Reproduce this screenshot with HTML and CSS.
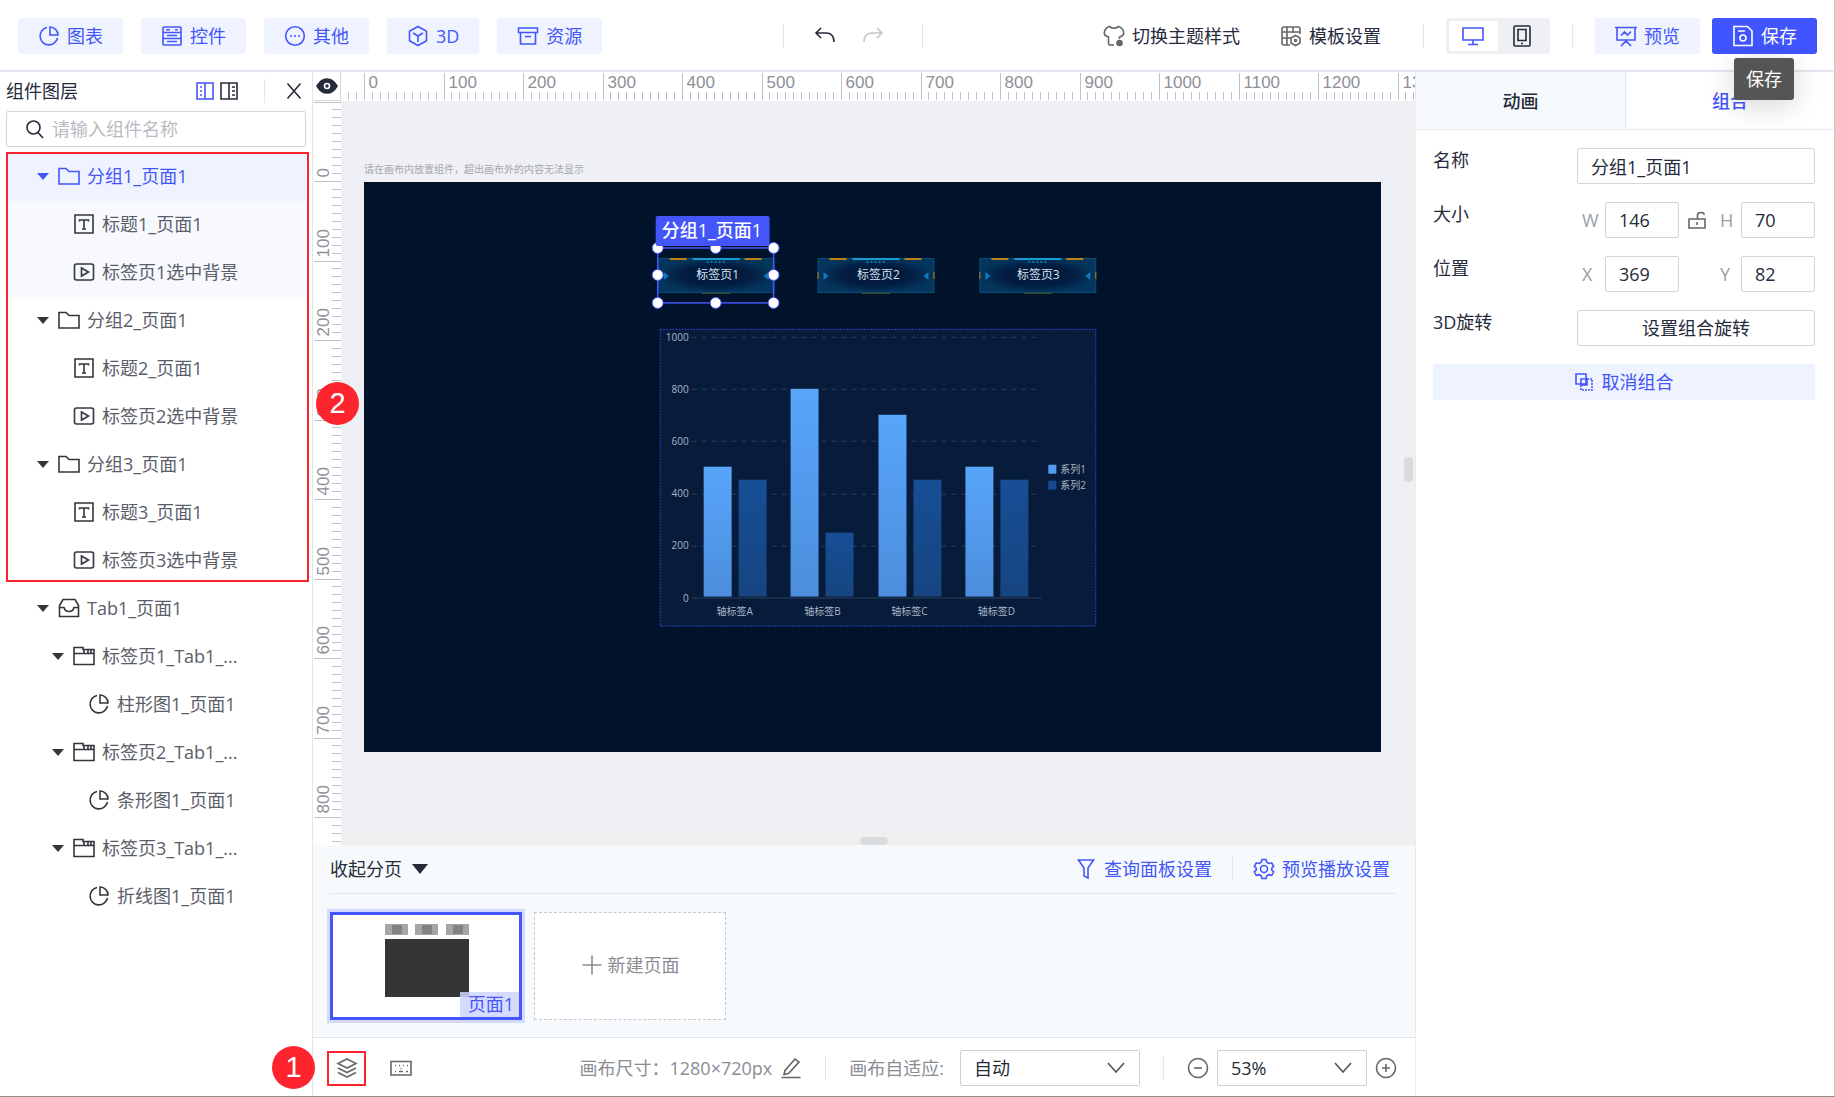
FILE: index.html
```html
<!DOCTYPE html>
<html lang="zh-CN">
<head>
	<meta charset="utf-8">
	<title>页面1 | 大屏编辑器</title>

	<link rel="stylesheet" href="styles.css">
</head>
<body>
<!-- icon set -->
<svg class="icon-defs" aria-hidden="true">
	<symbol id="i-pie" viewBox="0 0 22 22"><path d="M9 2.500a8.800 8.800 0 1 0 10.500 10.500M12 2v8h8a8 8 0 0 0-8-8z"/></symbol>
	<symbol id="i-control" viewBox="0 0 22 22"><rect x="2" y="2" width="18" height="18" rx="1"/><path d="M2 7.500h18M2 13.500h18M6 10.500h10M6 16.500h10M5 4.700h4M14 4.700h3"/></symbol>
	<symbol id="i-other" viewBox="0 0 22 22"><circle cx="11" cy="11" r="9.300"/><path d="M6 11h2M10 11h2M14 11h2"/></symbol>
	<symbol id="i-cube" viewBox="0 0 22 22"><path d="M11 1.500l8.500 4.800v9.400L11 20.500l-8.500-4.800V6.300zM6 8l5 3 5-3M11 11v6"/></symbol>
	<symbol id="i-archive" viewBox="0 0 22 22"><path d="M1.500 3h19v4.500h-19zM3.500 7.500V19h15V7.500M8 11.500h6"/></symbol>
	<symbol id="i-undo" viewBox="0 0 22 22"><path d="M7 3L2 8l5 5M2 8h10q8 0 8 9"/></symbol>
	<symbol id="i-redo" viewBox="0 0 22 22"><path d="M15 3l5 5-5 5M20 8H10Q2 8 2 17"/></symbol>
	<symbol id="i-shirt" viewBox="0 0 22 22"><path d="M11 20H7q-1.500 0-1.500-1.500V12Q1 11 1.300 7.500 2 3 6.500 1.500q4.500 3.500 9 0Q20 3 20.700 7.500 21 11 16.500 12v2"/><circle cx="16.500" cy="18" r="2.500" class="solid"/></symbol>
	<symbol id="i-template" viewBox="0 0 22 22"><path d="M10 20H4q-2 0-2-2V4q0-2 2-2h14q2 0 2 2v5M2 7h18M7 2v18M2 13h9M13 2v6"/><path d="M15.500 10.500l4.500 2.500v5l-4.500 2.500L11 18v-5z"/><circle cx="15.500" cy="15.500" r="1"/></symbol>
	<symbol id="i-monitor" viewBox="0 0 22 22"><path d="M1 3h20v12H1zM11 15v4M6 19.500h10"/></symbol>
	<symbol id="i-tablet" viewBox="0 0 22 22"><rect x="3" y="1" width="16" height="20" rx="1"/><path d="M7 4.500h8v11H7zM10 18.500h2"/></symbol>
	<symbol id="i-board" viewBox="0 0 22 22"><path d="M0 2.500h22M2 2.500V15h18V2.500M6 10.500l3.500-3.500 3 3L16 6.500M11 15v2M6 21l5-5 5 5"/></symbol>
	<symbol id="i-save" viewBox="0 0 22 22"><path d="M2 1.500h13.500L20 6v14.500H2zM6 6h7"/><circle cx="11" cy="13" r="3"/></symbol>
	<symbol id="i-dock-left" viewBox="0 0 18 18"><path d="M1 1h16v16H1zM9 1v16M4 5h2M4 9h2M4 13h2"/></symbol>
	<symbol id="i-dock-right" viewBox="0 0 18 18"><path d="M1 1h16v16H1zM9 1v16M12 5h3M12 9h3M12 13h3"/></symbol>
	<symbol id="i-close" viewBox="0 0 18 18"><path d="M2.500 1.500l13 15M15.500 1.500l-13 15"/></symbol>
	<symbol id="i-search" viewBox="0 0 22 22"><circle cx="9.500" cy="9.500" r="6.500"/><path d="M14 14.500l5 5.500"/></symbol>
	<symbol id="i-folder" viewBox="0 0 22 22"><path d="M1 3.500h7l3 3h10v12.500H1z"/></symbol>
	<symbol id="i-text" viewBox="0 0 22 22"><path d="M2 2h18v18H2zM6.500 8.500V7h9v1.500M11 7v9M9 16h4"/></symbol>
	<symbol id="i-play" viewBox="0 0 22 22"><rect x="1.500" y="3" width="19" height="16" rx="2"/><path d="M8.500 7l7 4-7 4z"/></symbol>
	<symbol id="i-tray" viewBox="0 0 22 22"><path d="M5 2.500h12l3.500 6v11h-19v-11zM1.500 10.500H6q1 4 5 4t5-4h4.500"/></symbol>
	<symbol id="i-tabs" viewBox="0 0 22 22"><path d="M1 2.500h9v2h11V19.500H1zM1 8.500h20M11 5v3M15 5v3M18 5v3"/></symbol>
	<symbol id="i-eye" viewBox="0 0 22 22"><path class="solid" d="M1 11Q5 4 11 4t10 7q-4 7-10 7T1 11z"/><circle cx="11" cy="11" r="2.500" class="hole"/></symbol>
	<symbol id="i-filter" viewBox="0 0 22 22"><path d="M3.500 2h15L13 10v10l-4-2v-8z"/></symbol>
	<symbol id="i-gear" viewBox="0 0 22 22"><path d="M9 1.500h4l.8 2.800 2 1.200 2.900-.7 2 3.500-2 2v1.600l2 2-2 3.500-2.900-.7-2 1.200L13 20.500H9l-.8-2.600-2-1.200-2.900.7-2-3.500 2-2v-1.600l-2-2 2-3.500 2.900.7 2-1.200z"/><circle cx="11" cy="11" r="3.500"/></symbol>
	<symbol id="i-plus" viewBox="0 0 22 22"><path d="M11 1.500v19M1.500 11h19"/></symbol>
	<symbol id="i-layers" viewBox="0 0 22 22"><path d="M11 2l9 4.500-9 4.500-9-4.500zM2 11l9 4.500 9-4.500M2 15.500L11 20l9-4.500"/></symbol>
	<symbol id="i-keyboard" viewBox="0 0 22 22"><path d="M1 4.500h20v13.500H1zM5 8.500h1M9 8.500h1M13 8.500h1M17 8.500h1M5 14.500h1M9 14.500h4M16 14.500h2M10.500 11.500h1"/></symbol>
	<symbol id="i-pencil" viewBox="0 0 22 22"><path d="M1.500 20.500h19M4 17.500l1-4L15 2l4 3L8.500 16.500z"/></symbol>
	<symbol id="i-chevron" viewBox="0 0 22 22"><path d="M3 6l8 9 8-9"/></symbol>
	<symbol id="i-zoom-out" viewBox="0 0 22 22"><circle cx="11" cy="11" r="9.500"/><path d="M7 11h8"/></symbol>
	<symbol id="i-zoom-in" viewBox="0 0 22 22"><circle cx="11" cy="11" r="9.500"/><path d="M7 11h8M11 7v8"/></symbol>
	<symbol id="i-unlock" viewBox="0 0 18 18"><path d="M1 8h16v9H1zM9.500 8V4q0-2.500 3.500-2.500T16 4M9 11v3"/></symbol>
	<symbol id="i-ungroup" viewBox="0 0 18 18"><path d="M1 1h10v10H1zM6 6h6v6H6z"/><path stroke-dasharray="2 1" d="M12 6h5v11H6v-5"/></symbol>
</svg>

<header class="topbar">
	<div class="topbar-group">
		<button class="btn"><svg class="icon"><use href="#i-pie"/></svg>图表</button>
		<button class="btn"><svg class="icon"><use href="#i-control"/></svg>控件</button>
		<button class="btn"><svg class="icon"><use href="#i-other"/></svg>其他</button>
		<button class="btn"><svg class="icon"><use href="#i-cube"/></svg>3D</button>
		<button class="btn"><svg class="icon"><use href="#i-archive"/></svg>资源</button>
	</div>
	<div class="history">
		<button class="plain" aria-label="撤销"><svg class="icon"><use href="#i-undo"/></svg></button>
		<button class="plain" aria-label="重做" disabled><svg class="icon"><use href="#i-redo"/></svg></button>
	</div>
	<div class="topbar-right">
		<button class="plain"><svg class="icon grey"><use href="#i-shirt"/></svg>切换主题样式</button>
		<button class="plain template"><svg class="icon grey"><use href="#i-template"/></svg>模板设置</button>
		<span class="divider"></span>
		<div class="segmented">
			<button class="on" aria-label="电脑"><svg class="icon"><use href="#i-monitor"/></svg></button>
			<button aria-label="平板"><svg class="icon"><use href="#i-tablet"/></svg></button>
		</div>
		<span class="divider"></span>
		<div class="topbar-actions">
			<button class="btn"><svg class="icon"><use href="#i-board"/></svg>预览</button>
			<div class="tip-anchor">
				<button class="btn primary"><svg class="icon"><use href="#i-save"/></svg>保存</button>
				<div class="tooltip" role="tooltip">保存</div>
			</div>
		</div>
	</div>
</header>

<main class="editor">
	<aside class="layers">
		<div class="layers-head">
			<h2>组件图层</h2>
			<button class="plain blue" aria-label="左侧停靠"><svg class="icon small"><use href="#i-dock-left"/></svg></button>
			<button class="plain" aria-label="右侧停靠"><svg class="icon small"><use href="#i-dock-right"/></svg></button>
			<span class="divider"></span>
			<button class="plain" aria-label="关闭"><svg class="icon small"><use href="#i-close"/></svg></button>
		</div>
		<label class="search">
			<svg class="icon"><use href="#i-search"/></svg>
			<input type="text" placeholder="请输入组件名称" aria-label="请输入组件名称">
		</label>
		<div class="marked">
			<ul class="tree">
				<li class="lv1 selected"><i class="caret"></i><svg class="icon"><use href="#i-folder"/></svg>分组1_页面1</li>
				<li class="lv2 leaf child"><svg class="icon"><use href="#i-text"/></svg>标题1_页面1</li>
				<li class="lv2 leaf child"><svg class="icon"><use href="#i-play"/></svg>标签页1选中背景</li>
				<li class="lv1"><i class="caret"></i><svg class="icon"><use href="#i-folder"/></svg>分组2_页面1</li>
				<li class="lv2 leaf"><svg class="icon"><use href="#i-text"/></svg>标题2_页面1</li>
				<li class="lv2 leaf"><svg class="icon"><use href="#i-play"/></svg>标签页2选中背景</li>
				<li class="lv1"><i class="caret"></i><svg class="icon"><use href="#i-folder"/></svg>分组3_页面1</li>
				<li class="lv2 leaf"><svg class="icon"><use href="#i-text"/></svg>标题3_页面1</li>
				<li class="lv2 leaf"><svg class="icon"><use href="#i-play"/></svg>标签页3选中背景</li>
			</ul>
			<span class="step step-two">2</span>
		</div>
		<ul class="tree">
			<li class="lv1"><i class="caret"></i><svg class="icon"><use href="#i-tray"/></svg>Tab1_页面1</li>
			<li class="lv2"><i class="caret"></i><svg class="icon"><use href="#i-tabs"/></svg>标签页1_Tab1_...</li>
			<li class="lv3 leaf"><svg class="icon"><use href="#i-pie"/></svg>柱形图1_页面1</li>
			<li class="lv2"><i class="caret"></i><svg class="icon"><use href="#i-tabs"/></svg>标签页2_Tab1_...</li>
			<li class="lv3 leaf"><svg class="icon"><use href="#i-pie"/></svg>条形图1_页面1</li>
			<li class="lv2"><i class="caret"></i><svg class="icon"><use href="#i-tabs"/></svg>标签页3_Tab1_...</li>
			<li class="lv3 leaf"><svg class="icon"><use href="#i-pie"/></svg>折线图1_页面1</li>
		</ul>
	</aside>

	<section class="work">
		<div class="workspace">
			<button class="corner" aria-label="显示标尺"><svg class="icon"><use href="#i-eye"/></svg></button>
			<svg class="ruler" id="ruler-x"></svg>
			<svg class="ruler" id="ruler-y"></svg>
			<div class="stage">
				<p class="hint">请在画布内放置组件，超出画布外的内容无法显示</p>
				<svg class="canvas" viewBox="0 0 1018 571">
					<defs>
						<radialGradient id="tab-fill">
							<stop offset="0" stop-color="#021737"/>
							<stop offset="0.6" stop-color="#031d42"/>
							<stop offset="1" stop-color="#05355c"/>
						</radialGradient>
						<linearGradient id="bar-light" x2="0" y2="1">
							<stop offset="0" stop-color="#58a5fb"/>
							<stop offset="1" stop-color="#4c8edc"/>
						</linearGradient>
						<linearGradient id="bar-dark" x2="0" y2="1">
							<stop offset="0" stop-color="#174e96"/>
							<stop offset="1" stop-color="#164580"/>
						</linearGradient>
						<g id="tab">
							<rect x="0.500" y="0.500" width="116" height="34" fill="url(#tab-fill)" stroke="#07507c"/>
							<path stroke="#b98212" stroke-width="2" d="M12 1h17M87 1h17"/>
							<path stroke="#1b9bd0" stroke-width="2" d="M35 1h47"/>
							<path stroke="#1272a5" stroke-width="2" stroke-dasharray="2 2" d="M49 4h18"/>
							<path stroke="#55521f" stroke-width="1" d="M44 35.500h29"/>
							<path stroke="#b98212" d="M.5 14v7M116.500 14v7"/>
							<path fill="#0c7cc4" d="M6 14l5 4-5 4zM111 14l-5 4 5 4z"/>
						</g>
					</defs>

					<use href="#tab" x="294" y="76"/>
					<use href="#tab" x="454" y="76"/>
					<use href="#tab" x="616" y="76"/>
					<g class="tab-text">
						<text x="354" y="97">标签页1</text>
						<text x="515" y="97">标签页2</text>
						<text x="675" y="97">标签页3</text>
					</g>

					<rect class="chart-box" x="296.500" y="147.500" width="436" height="297"/>
					<path class="grid" d="M328 155.500h350M328 207.500h350M328 259.500h350M328 312.500h350M328 364.500h350"/>
					<path class="axis" d="M328 416.500h350"/>
					<g class="axis-y">
						<text x="325" y="159">1000</text>
						<text x="325" y="211">800</text>
						<text x="325" y="263">600</text>
						<text x="325" y="315">400</text>
						<text x="325" y="367">200</text>
						<text x="325" y="420">0</text>
					</g>
					<g fill="url(#bar-light)">
						<rect x="340" y="285" width="28" height="130"/>
						<rect x="427" y="207" width="28" height="208"/>
						<rect x="515" y="233" width="28" height="182"/>
						<rect x="602" y="285" width="28" height="130"/>
					</g>
					<g fill="url(#bar-dark)">
						<rect x="375" y="298" width="28" height="117"/>
						<rect x="462" y="351" width="28" height="64"/>
						<rect x="550" y="298" width="28" height="117"/>
						<rect x="637" y="298" width="28" height="117"/>
					</g>
					<g class="axis-x">
						<text x="371" y="433">轴标签A</text>
						<text x="459" y="433">轴标签B</text>
						<text x="546" y="433">轴标签C</text>
						<text x="633" y="433">轴标签D</text>
					</g>
					<rect x="685" y="283" width="8" height="9" fill="#529bee"/>
					<rect x="685" y="299" width="8" height="9" fill="#174a8d"/>
					<g class="legend">
						<text x="697" y="291">系列1</text>
						<text x="697" y="307">系列2</text>
					</g>

					<!-- selected group -->
					<rect class="frame" x="294" y="66" width="116" height="55"/>
					<g class="handles">
						<circle cx="294" cy="66" r="5.500"/><circle cx="352" cy="66" r="5.500"/><circle cx="410" cy="66" r="5.500"/>
						<circle cx="294" cy="93" r="5.500"/><circle cx="410" cy="93" r="5.500"/>
						<circle cx="294" cy="121" r="5.500"/><circle cx="352" cy="121" r="5.500"/><circle cx="410" cy="121" r="5.500"/>
					</g>
					<rect x="292" y="34" width="114" height="30" rx="2" fill="#4456fa"/>
					<text class="frame-name" x="298" y="55">分组1_页面1</text>
				</svg>
				<span class="thumb-y"></span>
				<span class="thumb-x"></span>
			</div>
		</div>

		<div class="pages">
			<div class="pages-head">
				<button class="plain">收起分页<i class="caret big"></i></button>
				<div class="pages-links">
					<a href="#"><svg class="icon"><use href="#i-filter"/></svg>查询面板设置</a>
					<span class="divider"></span>
					<a href="#"><svg class="icon"><use href="#i-gear"/></svg>预览播放设置</a>
				</div>
			</div>
			<div class="pages-list">
				<button class="page current">
					<svg class="preview" viewBox="0 0 84 73">
						<path fill="#a5a5a5" d="M0 0h23v11H0zM30 0h23v11H30zM61 0h23v11H61z"/>
						<path fill="#828282" d="M7 1h10v9H7zM37 1h10v9H37zM68 1h10v9H68z"/>
						<path fill="#353535" d="M0 15h84v58H0z"/>
					</svg>
					<span class="page-name">页面1</span>
				</button>
				<button class="page add"><svg class="icon"><use href="#i-plus"/></svg>新建页面</button>
			</div>
		</div>

		<footer class="statusbar">
			<span class="step step-one">1</span>
			<button class="plain layer-toggle" aria-label="图层"><svg class="icon"><use href="#i-layers"/></svg></button>
			<button class="plain" aria-label="快捷键"><svg class="icon"><use href="#i-keyboard"/></svg></button>
			<div class="status-right">
				<span class="size">画布尺寸：<span>1280×720px</span></span>
				<button class="plain" aria-label="编辑尺寸"><svg class="icon"><use href="#i-pencil"/></svg></button>
				<span class="divider"></span>
				<label for="fit">画布自适应:</label>
				<span class="select fit">
					<select id="fit"><option>自动</option></select>
					<svg class="icon"><use href="#i-chevron"/></svg>
				</span>
				<span class="divider"></span>
				<div class="zoom">
					<button class="plain" aria-label="缩小"><svg class="icon"><use href="#i-zoom-out"/></svg></button>
					<span class="select">
						<select aria-label="缩放比例"><option>53%</option></select>
						<svg class="icon"><use href="#i-chevron"/></svg>
					</span>
					<button class="plain" aria-label="放大"><svg class="icon"><use href="#i-zoom-in"/></svg></button>
				</div>
			</div>
		</footer>
	</section>

	<aside class="props">
		<div class="tabs">
			<button>动画</button>
			<button class="on">组合</button>
		</div>
		<form class="fields">
			<div class="field">
				<label for="name">名称</label>
				<input type="text" id="name" value="分组1_页面1">
			</div>
			<div class="field">
				<span>大小</span>
				<div class="pair">
					<label for="w">W</label><input type="text" id="w" value="146">
					<svg class="icon small"><use href="#i-unlock"/></svg>
					<label for="h">H</label><input type="text" id="h" value="70">
				</div>
			</div>
			<div class="field">
				<span>位置</span>
				<div class="pair">
					<label for="x">X</label><input type="text" id="x" value="369">
					<i></i>
					<label for="y">Y</label><input type="text" id="y" value="82">
				</div>
			</div>
			<div class="field">
				<span>3D旋转</span>
				<button type="button" class="outline">设置组合旋转</button>
			</div>
			<button type="button" class="btn ungroup"><svg class="icon small"><use href="#i-ungroup"/></svg>取消组合</button>
		</form>
	</aside>
</main>

<script>
  // screen pixels per 100 canvas units
  const step = 79.5
  const rulerX = document.getElementById('ruler-x')
  const rulerY = document.getElementById('ruler-y')

  function horizontal (zero, count) {
    let html = ''
    for (let i = -2; i < count * 10; i++) {
      const x = Math.round(zero + i * step / 10) + 0.5
      const major = i % 10 === 0
      html += `<path d="M${x} ${major ? 1 : 20}V28"/>`
      if (major) {
        html += `<text x="${x + 4}" y="16">${i * 10}</text>`
      }
    }
    rulerX.innerHTML = html
  }

  function vertical (zero, count) {
    let html = ''
    for (let i = -10; i < count * 10; i++) {
      const y = Math.round(zero + i * step / 10) + 0.5
      const major = i % 10 === 0
      html += `<path d="M${major ? 1 : 19} ${y}H28"/>`
      if (major && i >= 0) {
        html += `<text transform="translate(16 ${y - 4}) rotate(-90)">${i * 10}</text>`
      }
    }
    rulerY.innerHTML = html
  }

  horizontal(23, 14)
  vertical(80, 9)
</script>
</body>
</html>
```
FILE: styles.css
```css
* {
	box-sizing: border-box;
}

body {
	display: flex;
	flex-direction: column;
	height: 100vh;
	margin: 0;
	border-right: 1px solid #c4c9d0;
	border-bottom: 1px solid #8f8f94;
	background: #fff;
	color: #252b3a;
	font: 18px/24px "Open Sans", "Noto Sans CJK SC", sans-serif;
	overflow: hidden;
}

button,
input,
select {
	margin: 0;
	padding: 0;
	border: none;
	background: none;
	color: inherit;
	font: inherit;
}

h2,
p,
ul {
	margin: 0;
	padding: 0;
	font-size: 18px;
	font-weight: normal;
	list-style: none;
}

a {
	color: #4456fa;
	text-decoration: none;
}

.icon-defs {
	position: absolute;
	width: 0;
	height: 0;
}

.icon {
	flex: none;
	width: 22px;
	height: 22px;
	fill: none;
	stroke: currentColor;
	stroke-width: 1.6;
}

.icon.small {
	width: 18px;
	height: 18px;
}

.icon.grey {
	color: #666;
}

.solid {
	fill: currentColor;
}

.hole {
	stroke: #fff;
}

.divider {
	width: 1px;
	height: 24px;
	background: #e4e6ec;
}

.caret {
	flex: none;
	border: 6px solid transparent;
	border-top: 7px solid currentColor;
	border-bottom: none;
}

.caret.big {
	border-width: 10px 8px 0;
}

/* buttons */
.btn,
.plain {
	display: flex;
	align-items: center;
	justify-content: center;
	gap: 7px;
}

.btn {
	height: 36px;
	padding: 0 20px;
	border-radius: 3px;
	background: #eff3ff;
	color: #4456fa;
}

.btn.primary {
	background: #4055ff;
	color: #fff;
}

.blue {
	color: #4456fa;
}

.plain:disabled {
	color: #c3c5ca;
}

/* top bar */
.topbar {
	flex: none;
	display: flex;
	align-items: center;
	justify-content: space-between;
	height: 72px;
	padding: 2px 17px 0 18px;
	border-bottom: 2px solid #e4e6ef;
}

.topbar-group {
	display: flex;
	gap: 18px;
}

.history {
	display: flex;
	gap: 26px;
	padding: 1px 38px 1px 30px;
	border: 1px solid #e4e6ec;
	border-width: 0 1px;
}

.topbar-right {
	display: flex;
	align-items: center;
	gap: 22px;
}

.topbar-right .template {
	margin: 0 20px 0 18px;
}

.segmented {
	display: flex;
	padding: 3px;
	border-radius: 3px;
	background: #eff0f4;
}

.segmented button {
	display: flex;
	align-items: center;
	justify-content: center;
	width: 49px;
	height: 30px;
	border-radius: 2px;
}

.segmented .on {
	background: #fff;
	color: #4456fa;
}

.topbar-actions {
	display: flex;
	gap: 12px;
}

.tip-anchor {
	position: relative;
}

.tooltip {
	position: absolute;
	z-index: 5;
	top: 40px;
	left: 22px;
	padding: 9px 12px;
	border-radius: 3px;
	background: #555;
	color: #fff;
	white-space: nowrap;
	box-shadow: 0 6px 28px rgba(0, 0, 0, 0.16);
}

/* columns */
.editor {
	flex: 1;
	display: grid;
	grid-template-columns: 312px 1fr 419px;
	min-height: 0;
}

/* layer tree */
.layers {
	padding: 0 6px;
}

.layers-head {
	display: flex;
	align-items: center;
	height: 39px;
	padding: 0 3px 2px 0;
	gap: 6px;
}

.layers-head h2 {
	flex: 1;
}

.layers-head .divider {
	margin: 0 14px 0 20px;
}

.search {
	display: flex;
	align-items: center;
	gap: 6px;
	height: 36px;
	margin-bottom: 6px;
	padding-left: 17px;
	border: 1px solid #d2d5dc;
	border-radius: 2px;
}

.search input {
	width: 100%;
	outline: none;
}

.search input::placeholder {
	color: #b9bbc2;
}

.tree li {
	display: flex;
	align-items: center;
	gap: 7px;
	height: 48px;
	padding-bottom: 2px;
	color: #5a5e68;
}

.tree .icon,
.tree .caret {
	color: #33363d;
}

.tree .caret {
	margin-right: 2px;
}

.tree .lv1 {
	padding-left: 31px;
}

.tree .lv2 {
	padding-left: 46px;
}

.tree .lv2.leaf {
	padding-left: 67px;
}

.tree .lv3.leaf {
	padding-left: 82px;
}

.tree .selected {
	background: #eff3ff;
	color: #4456fa;
}

.tree .selected .icon,
.tree .selected .caret {
	color: #4456fa;
}

.tree .child {
	background: #f7f9ff;
}

.marked {
	position: relative;
}

.marked::after {
	content: "";
	position: absolute;
	inset: -1px -3px 3px 0;
	border: 2px solid #fe242e;
	pointer-events: none;
}

.step {
	position: absolute;
	z-index: 4;
	width: 43px;
	height: 43px;
	border-radius: 50%;
	background: #fe242e;
	color: #fff;
	font: 29px/43px "Liberation Sans", sans-serif;
	text-align: center;
}

.step-two {
	top: 229px;
	right: -53px;
}

.step-one {
	top: 8px;
	left: -41px;
}

/* work area */
.work {
	display: flex;
	flex-direction: column;
	min-width: 0;
	border-left: 1px solid #e4e6ef;
}

.workspace {
	flex: 1;
	display: grid;
	grid-template: 29px 1fr / 28px 1fr;
	min-height: 0;
}

.corner {
	display: flex;
	align-items: center;
	justify-content: center;
	border: 1px solid #d4d6dd;
	border-width: 0 1px 1px 0;
}

.ruler {
	width: 100%;
	height: 100%;
	overflow: hidden;
	stroke: #c0c1c7;
}

.ruler text {
	fill: #8e9097;
	stroke: none;
	font: 17px "Liberation Sans", sans-serif;
}

.stage {
	position: relative;
	padding: 59px 22px 0 23px;
	border: solid #efefef;
	border-width: 0 12px 11px 0;
	background: #eff0f5;
}

.hint {
	height: 22px;
	color: #a5a7ae;
	font-size: 10px;
	line-height: 18px;
}

.canvas {
	display: block;
	width: 100%;
	background: #00132b;
}

.thumb-x,
.thumb-y {
	position: absolute;
	border-radius: 4px;
	background: #dadbdc;
}

.thumb-x {
	bottom: -11px;
	left: 519px;
	width: 28px;
	height: 8px;
}

.thumb-y {
	top: 356px;
	right: -10px;
	width: 9px;
	height: 25px;
}

/* drawing on the canvas */
.canvas text {
	font-size: 10px;
	fill: #a9b4c6;
}

.canvas .tab-text text {
	font-size: 12px;
	fill: #d5e3f2;
	text-anchor: middle;
}

.canvas .axis-y text {
	text-anchor: end;
}

.canvas .axis-x text {
	text-anchor: middle;
}

.chart-box {
	fill: #071c3a;
	stroke: #2c40cc;
	stroke-dasharray: 2 1;
}

.grid {
	stroke: #2c3d57;
	stroke-dasharray: 5 5;
}

.axis {
	stroke: #2c3d57;
}

.frame {
	fill: none;
	stroke: #4456fa;
	stroke-width: 1.5;
}

.handles {
	fill: #fff;
	stroke: #4456fa;
}

.canvas .frame-name {
	font-size: 18px;
	font-weight: 500;
	fill: #fff;
}

/* page strip */
.pages {
	height: 193px;
	padding: 0 19px 0 17px;
	border-bottom: 1px solid #dfe3ea;
	background: #f6fafc;
}

.pages-head {
	display: flex;
	justify-content: space-between;
	align-items: center;
	height: 49px;
	padding-right: 6px;
	border-bottom: 1px solid #e2e7ec;
}

.pages-head .plain {
	gap: 10px;
}

.pages-links {
	display: flex;
	align-items: center;
	gap: 20px;
}

.pages-links a {
	display: flex;
	align-items: center;
	gap: 7px;
}

.pages-list {
	display: flex;
	gap: 12px;
	padding-top: 18px;
}

.page {
	display: flex;
	align-items: center;
	justify-content: center;
	gap: 5px;
	width: 192px;
	height: 108px;
	background: #fff;
}

.page.current {
	position: relative;
	border: 3px solid #4456fa;
	box-shadow: 0 0 0 3px #d4daff;
}

.preview {
	width: 84px;
	margin: 0 0 12px 2px;
}

.page-name {
	position: absolute;
	right: 0;
	bottom: 0;
	padding: 0 5px 1px 8px;
	background: rgba(206, 211, 255, 0.85);
	color: #4456fa;
}

.page.add {
	padding-bottom: 2px;
	border: 1px dashed #c4c6cc;
	color: #8a8d94;
}

/* status bar */
.statusbar {
	position: relative;
	display: flex;
	align-items: center;
	height: 58px;
	padding: 2px 18px 0 14px;
	color: #8a8d94;
}

.statusbar .plain {
	color: #666;
}

.layer-toggle {
	width: 39px;
	height: 35px;
	margin-right: 24px;
	border: 2px solid #fe242e;
}

.status-right {
	display: flex;
	align-items: center;
	margin-left: auto;
}

.status-right .plain {
	margin-left: 8px;
}

.status-right .divider {
	margin: 0 23px;
}

.select {
	display: grid;
	align-items: center;
	width: 150px;
	color: #252b3a;
}

.select.fit {
	width: 180px;
	margin-left: 16px;
}

.select select,
.select .icon {
	grid-area: 1 / 1;
}

.select select {
	width: 100%;
	height: 36px;
	padding: 0 13px;
	border: 1px solid #cdd0d7;
	border-radius: 2px;
	appearance: none;
}

.select .icon {
	justify-self: end;
	margin-right: 13px;
	color: #555;
	pointer-events: none;
}

.zoom {
	display: flex;
	align-items: center;
	gap: 8px;
}

.zoom .plain {
	margin: 0;
}

/* properties */
.props {
	border-left: 1px solid #e8ebf0;
}

.tabs {
	display: grid;
	grid-template-columns: 1fr 1fr;
	height: 58px;
	border-bottom: 1px solid #e6ebf0;
}

.tabs button {
	background: #f6fafc;
	font-weight: 500;
}

.tabs .on {
	border-left: 1px solid #e6ebf0;
	background: #fff;
	color: #4456fa;
}

.fields {
	display: flex;
	flex-direction: column;
	gap: 18px;
	padding: 18px 19px 0 17px;
}

.field {
	display: grid;
	grid-template-columns: 1fr 238px;
}

.field input,
.outline {
	width: 100%;
	height: 36px;
	border: 1px solid #d2d5dc;
	border-radius: 2px;
}

.field input {
	padding: 0 13px;
}

.pair {
	display: grid;
	grid-template-columns: 28px 74px 41px 21px 74px;
	align-items: center;
}

.pair label {
	padding-left: 5px;
	color: #9a9da5;
}

.pair label ~ label {
	padding-left: 0;
}

.pair .icon {
	margin-left: 9px;
	color: #666;
}

.ungroup {
	gap: 9px;
	border-radius: 0;
}
```
